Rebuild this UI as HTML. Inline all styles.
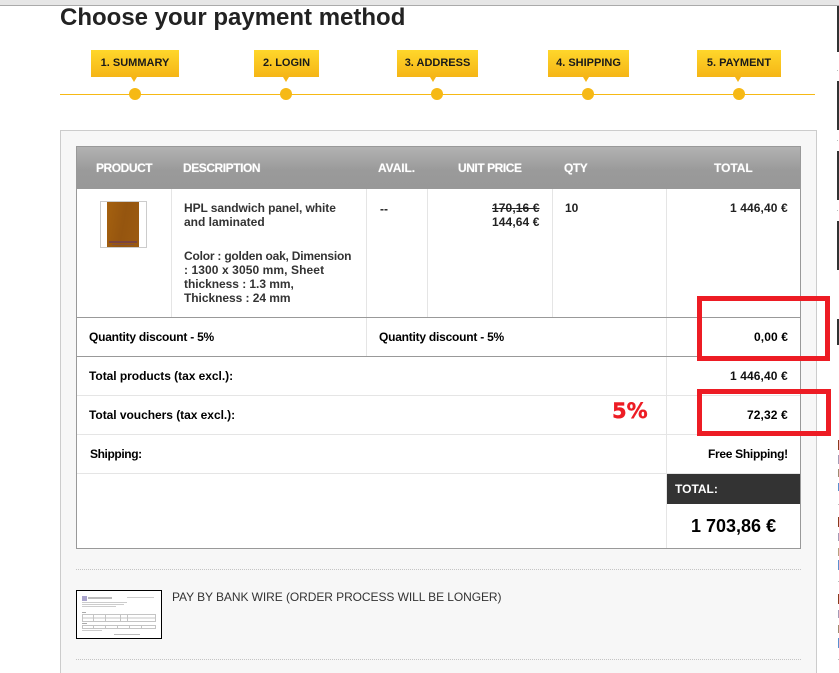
<!DOCTYPE html>
<html lang="en"><head><meta charset="utf-8"><title>Choose your payment method</title>
<style>
html,body{margin:0;padding:0;background:#fff}
#p{position:relative;width:839px;height:673px;overflow:hidden;background:#fff;font-family:"Liberation Sans",Arial,sans-serif;font-size:12px;font-weight:bold;color:#000}
#p div,#p span.t{position:absolute}
.t{white-space:nowrap;line-height:14px}
.step{top:50px;height:27px;line-height:26px;text-align:center;background:linear-gradient(#ffd72b,#f5b516);color:#1a1a1a;font-size:11px}
.step i{position:absolute;top:27px;width:0;height:0;border-left:3px solid transparent;border-right:3px solid transparent;border-top:5px solid #f5b516}
.dot{top:88px;width:12px;height:12px;border-radius:50%;background:#f6b915;border:0}
.h{color:#fff;top:161px;letter-spacing:-.45px;text-shadow:0 0 1px rgba(255,255,255,.5)}
.v{background:#e5e5e5;width:1px}
.hl{background:#e5e5e5;height:1px;left:77px;width:723px}
.g{background:#999;height:1px;left:77px;width:723px}
.d{color:#333}
.bar{left:837px;width:2px;background:#333}
.sp{left:837px;width:1px;height:1px;background:#bbb}
.sl{left:838px;width:1px}
.red{border:5px solid #ed1c24;box-sizing:border-box;background:transparent}
.dots{left:76px;width:725px;height:0;border-top:1px dotted #c4c4c4}
</style></head><body><div id="p">
<div style="left:0;top:0;width:839px;height:5px;background:#e6e6e6"></div>
<div style="left:0;top:5px;width:839px;height:1px;background:#aaa"></div>

<span class="t" style="left:60px;top:4px;font-size:24px;line-height:28px;color:#222">Choose your payment method</span>

<div style="left:60px;top:94px;width:755px;height:1px;background:#f6b915"></div>
<div class="step" style="left:91px;width:88px">1. SUMMARY<i style="left:40px"></i></div>
<div class="step" style="left:254px;width:65px">2. LOGIN<i style="left:29px"></i></div>
<div class="step" style="left:397px;width:81px">3. ADDRESS<i style="left:33px"></i></div>
<div class="step" style="left:548px;width:81px">4. SHIPPING<i style="left:35px"></i></div>
<div class="step" style="left:697px;width:84px">5. PAYMENT<i style="left:38px"></i></div>
<div class="dot" style="left:129px"></div>
<div class="dot" style="left:280px"></div>
<div class="dot" style="left:431px"></div>
<div class="dot" style="left:582px"></div>
<div class="dot" style="left:733px"></div>

<div style="left:60px;top:130px;width:755px;height:560px;background:#f7f7f7;border:1px solid #ccc"></div>

<div style="left:76px;top:146px;width:723px;height:401px;background:#fff;border:1px solid #999"></div>
<div style="left:77px;top:147px;width:723px;height:42px;background:linear-gradient(#b2b2b2,#9a9a9a 55%,#989898)"></div>
<span class="t h" style="left:96px">PRODUCT</span>
<span class="t h" style="left:183px">DESCRIPTION</span>
<span class="t h" style="left:378px;letter-spacing:-.1px">AVAIL.</span>
<span class="t h" style="left:458px">UNIT PRICE</span>
<span class="t h" style="left:564px">QTY</span>
<span class="t h" style="left:714px;letter-spacing:-.05px">TOTAL</span>

<div class="v" style="left:171px;top:189px;height:128px"></div>
<div class="v" style="left:366px;top:189px;height:167px"></div>
<div class="v" style="left:427px;top:189px;height:128px"></div>
<div class="v" style="left:552px;top:189px;height:128px"></div>
<div class="v" style="left:666px;top:189px;height:359px"></div>

<div class="g" style="top:317px"></div>
<div class="g" style="top:356px"></div>
<div class="hl" style="top:395px"></div>
<div class="hl" style="top:434px"></div>
<div class="hl" style="top:473px"></div>

<div style="left:100px;top:201px;width:45px;height:45px;border:1px solid #ccc;background:#fff"></div>
<div style="left:107px;top:202px;width:32px;height:45px;background:linear-gradient(100deg,#a5610f,#95550f 50%,#9c5b10)"></div>
<div style="left:109px;top:241px;width:28px;height:2px;background:#7a4440"></div>
<div style="left:112px;top:244px;width:22px;height:1px;background:#84503c"></div>

<span class="t d" style="left:184px;top:201px;letter-spacing:-.08px">HPL sandwich panel, white</span>
<span class="t d" style="left:184px;top:215px">and laminated</span>
<span class="t d" style="left:184px;top:249px;letter-spacing:-.21px">Color : golden oak, Dimension</span>
<span class="t d" style="left:184px;top:263px;letter-spacing:.09px">: 1300 x 3050 mm, Sheet</span>
<span class="t d" style="left:184px;top:277px;letter-spacing:-.05px">thickness : 1.3 mm,</span>
<span class="t d" style="left:184px;top:291px;letter-spacing:-.05px">Thickness : 24 mm</span>

<span class="t" style="left:380px;top:202px;color:#222">--</span>
<span class="t" style="left:492px;top:201px;color:#222;text-decoration:line-through;letter-spacing:.1px">170,16 €</span>
<span class="t" style="left:492px;top:215px;color:#222;letter-spacing:.1px">144,64 €</span>
<span class="t" style="left:565px;top:201px;color:#222">10</span>
<span class="t" style="left:730px;top:201px;color:#222;letter-spacing:.1px">1 446,40 €</span>

<span class="t" style="left:89px;top:330px;letter-spacing:-.23px">Quantity discount - 5%</span>
<span class="t" style="left:379px;top:330px;letter-spacing:-.23px">Quantity discount - 5%</span>
<span class="t" style="left:754px;top:330px;letter-spacing:.1px">0,00 €</span>
<span class="t" style="left:89px;top:369px;letter-spacing:-.04px">Total products (tax excl.):</span>
<span class="t" style="left:730px;top:369px;color:#111;letter-spacing:.1px">1 446,40 €</span>
<span class="t" style="left:89px;top:408px;letter-spacing:-.04px">Total vouchers (tax excl.):</span>
<span class="t" style="left:747px;top:408px;letter-spacing:.1px">72,32 €</span>
<span class="t" style="left:90px;top:447px;letter-spacing:-.4px">Shipping:</span>
<span class="t" style="left:708px;top:447px;letter-spacing:-.3px">Free Shipping!</span>

<span class="t" style="left:612px;top:399px;font-family:'DejaVu Sans',sans-serif;font-size:21px;line-height:25px;color:#ed1c24;-webkit-text-stroke:.4px #ed1c24">5%</span>

<div style="left:667px;top:474px;width:133px;height:30px;background:#333"></div>
<span class="t" style="left:675px;top:482px;color:#fff">TOTAL:</span>
<span class="t" style="left:691px;top:516px;font-size:18px;line-height:21px;color:#000">1 703,86 €</span>

<div class="dots" style="top:569px"></div>
<div class="dots" style="top:659px"></div>

<div style="left:76px;top:590px;width:84px;height:47px;border:1px solid #000;background:#fff"></div>
<svg style="position:absolute;left:77px;top:591px" width="84" height="47" viewBox="0 0 84 47">
<rect x="5" y="5" width="5" height="5" fill="#a9a4cc"/>
<rect x="11" y="6" width="24" height="2" fill="#bbb"/>
<rect x="50" y="6" width="27" height="1" fill="#ccc"/>
<rect x="5" y="11" width="45" height="1" fill="#ccc"/><rect x="5" y="13" width="42" height="1" fill="#ccc"/><rect x="5" y="15" width="34" height="1" fill="#ccc"/>
<rect x="5" y="21" width="4" height="1" fill="#aaa"/>
<path d="M5.500 23.500H78.500V30.500H5.500ZM5.500 27H78.500M16.500 23.500V30.500M28.500 23.500V30.500M43.500 23.500V30.500M50.500 23.500V30.500" fill="none" stroke="#c4c4c4"/>
<rect x="5" y="32" width="5" height="1" fill="#aaa"/>
<path d="M5.500 34.500H78.500V37.500H5.500ZM16.500 34.500V37.500M28.500 34.500V37.500M40.500 34.500V37.500M52.500 34.500V37.500M64.500 34.500V37.500" fill="none" stroke="#c4c4c4"/>
<rect x="5" y="39" width="20" height="1" fill="#ccc"/>
<rect x="37" y="43" width="26" height="1" fill="#bbb"/>
</svg>
<span class="t" style="left:172px;top:590px;font-weight:normal;color:#333;letter-spacing:-.07px">PAY BY BANK WIRE (ORDER PROCESS WILL BE LONGER)</span>

<div class="red" style="left:697px;top:296px;width:133px;height:65px"></div>
<div class="red" style="left:697px;top:389px;width:134px;height:47px"></div>

<div class="bar" style="top:6px;height:46px"></div>
<div class="sp" style="top:70px"></div>
<div class="bar" style="top:81px;height:49px"></div>
<div class="sp" style="top:140px"></div>
<div class="bar" style="top:151px;height:49px"></div>
<div class="sp" style="top:210px"></div>
<div class="bar" style="top:221px;height:49px"></div>
<div class="bar" style="top:319px;height:26px"></div>

<div class="sl" style="top:440px;height:10px;background:#8b3a1e"></div>
<div class="sl" style="top:455px;height:9px;background:#a59ab5"></div>
<div class="sl" style="top:469px;height:8px;background:#a08a70"></div>
<div class="sl" style="top:483px;height:8px;background:#5b8fd0"></div>
<div class="sp" style="top:504px;left:838px"></div>
<div class="sl" style="top:517px;height:10px;background:#8b3a1e"></div>
<div class="sl" style="top:533px;height:8px;background:#a59ab5"></div>
<div class="sl" style="top:548px;height:8px;background:#b8a080"></div>
<div class="sl" style="top:560px;height:10px;background:#5b8fd0"></div>
<div class="sp" style="top:581px;left:838px"></div>
<div class="sl" style="top:594px;height:10px;background:#8b3a1e"></div>
<div class="sl" style="top:610px;height:8px;background:#a59ab5"></div>
<div class="sl" style="top:625px;height:8px;background:#a08a70"></div>
<div class="sl" style="top:638px;height:10px;background:#5b8fd0"></div>
<div class="sp" style="top:659px;left:838px"></div>
</div></body></html>
